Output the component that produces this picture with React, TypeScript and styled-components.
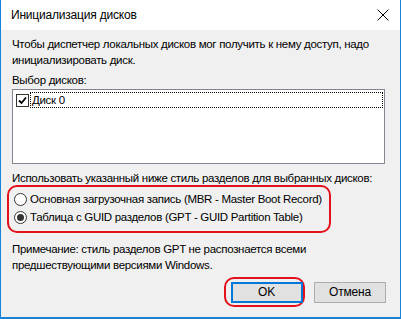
import React from "react";
import styled, { createGlobalStyle } from "styled-components";

const GlobalStyle = createGlobalStyle`
  html, body {
    margin: 0;
    padding: 0;
    background: #ffffff;
  }
`;

const FONT = `"Liberation Sans", Arial, sans-serif`;

const Window = styled.div`
  width: 401px;
  height: 319px;
  box-sizing: border-box;
  border: 1px solid #1883d7;
  border-top: none;
  border-bottom-width: 2px;
  display: flex;
  flex-direction: column;
  font-family: ${FONT};
  font-size: 11.5px;
  letter-spacing: -0.3px;
  color: #000000;
  background: #f0f0f0;
  white-space: nowrap;
`;

const TitleBar = styled.div`
  height: 30px;
  flex: none;
  background: #ffffff;
  display: flex;
  align-items: center;
  justify-content: space-between;
  padding: 0 8px 0 10px;
`;

const Title = styled.div`
  font-size: 12px;
  letter-spacing: -0.2px;
  line-height: 16px;
  margin-top: -1px;
`;

const CloseIcon = styled.svg`
  width: 12px;
  height: 12px;
  margin-right: 3px;
  margin-top: -1px;
`;

const Body = styled.div`
  flex: 1;
  display: flex;
  flex-direction: column;
  padding: 6px 15px 0 11px;
`;

const Text = styled.div<{ $mt?: number }>`
  line-height: 16px;
  margin-top: ${(p) => p.$mt ?? 0}px;
`;

const ListBox = styled.div`
  margin-top: 1px;
  height: 75px;
  box-sizing: border-box;
  background: #ffffff;
  border: 1px solid #828790;
  padding: 2px 2px 0 2px;
`;

const ListRow = styled.div`
  display: flex;
  align-items: center;
  gap: 2px;
  height: 16px;
`;

const CheckBox = styled.div`
  width: 11px;
  height: 11px;
  border: 1px solid #333333;
  background: #ffffff;
  display: flex;
  align-items: center;
  justify-content: center;
  flex: none;
  margin-left: 1px;
`;

const RowLabel = styled.div`
  flex: 1;
  height: 14px;
  line-height: 14px;
  outline: 1px dotted #000000;
  outline-offset: 0;
  padding-left: 1px;
`;

const Highlight = styled.div`
  border: 2.5px solid #e3111b;
  border-radius: 10px;
`;

const RadioGroup = styled(Highlight)`
  margin: -1px 0 0 -5px;
  width: 315px;
  padding: 4px 0 6px 5px;
  display: flex;
  flex-direction: column;
  gap: 2px;
`;

const RadioRow = styled.div`
  display: flex;
  align-items: center;
  gap: 3px;
  height: 16px;
`;

const Radio = styled.div<{ $checked?: boolean }>`
  width: 11px;
  height: 11px;
  border: 1px solid #333333;
  border-radius: 50%;
  background: #ffffff;
  display: flex;
  align-items: center;
  justify-content: center;
  flex: none;
  &::after {
    content: "";
    display: ${(p) => (p.$checked ? "block" : "none")};
    width: 7px;
    height: 7px;
    border-radius: 50%;
    background: #333333;
  }
`;

const Footer = styled.div`
  margin-top: auto;
  margin-bottom: 10px;
  display: flex;
  justify-content: flex-end;
  align-items: center;
  gap: 9px;
  margin-right: -1px;
`;

const OkRing = styled(Highlight)`
  padding: 2.5px 0.5px 2.5px 4.5px;
`;

const Button = styled.button<{ $primary?: boolean }>`
  width: 72px;
  height: 21px;
  box-sizing: border-box;
  background: #e1e1e1;
  border: 1px solid ${(p) => (p.$primary ? "#0078d7" : "#adadad")};
  box-shadow: ${(p) => (p.$primary ? "inset 0 0 0 1px #0078d7" : "none")};
  font-family: ${FONT};
  font-size: 12px;
  letter-spacing: -0.2px;
  color: #000000;
  padding: 0;
`;

const App = () => {
  return (
    <>
      <GlobalStyle />
      <Window>
        <TitleBar>
          <Title>Инициализация дисков</Title>
          <CloseIcon viewBox="0 0 12 12">
            <path d="M0.5 0.5 L11.5 11.5 M11.5 0.5 L0.5 11.5" stroke="#000" strokeWidth="1" />
          </CloseIcon>
        </TitleBar>
        <Body>
          <Text>
            Чтобы диспетчер локальных дисков мог получить к нему доступ, надо
            <br />
            инициализировать диск.
          </Text>
          <Text $mt={4}>Выбор дисков:</Text>
          <ListBox>
            <ListRow>
              <CheckBox>
                <svg width="9" height="9" viewBox="0 0 9 9">
                  <path d="M1 4.5 L3.5 7 L8 1.5" stroke="#000" strokeWidth="1.8" fill="none" />
                </svg>
              </CheckBox>
              <RowLabel>Диск 0</RowLabel>
            </ListRow>
          </ListBox>
          <Text $mt={6}>Использовать указанный ниже стиль разделов для выбранных дисков:</Text>
          <RadioGroup>
            <RadioRow>
              <Radio />
              <span>Основная загрузочная запись (MBR - Master Boot Record)</span>
            </RadioRow>
            <RadioRow>
              <Radio $checked />
              <span>Таблица с GUID разделов (GPT - GUID Partition Table)</span>
            </RadioRow>
          </RadioGroup>
          <Text $mt={8}>
            Примечание: стиль разделов GPT не распознается всеми
            <br />
            предшествующими версиями Windows.
          </Text>
          <Footer>
            <OkRing>
              <Button $primary>OK</Button>
            </OkRing>
            <Button>Отмена</Button>
          </Footer>
        </Body>
      </Window>
    </>
  );
};

export default App;
